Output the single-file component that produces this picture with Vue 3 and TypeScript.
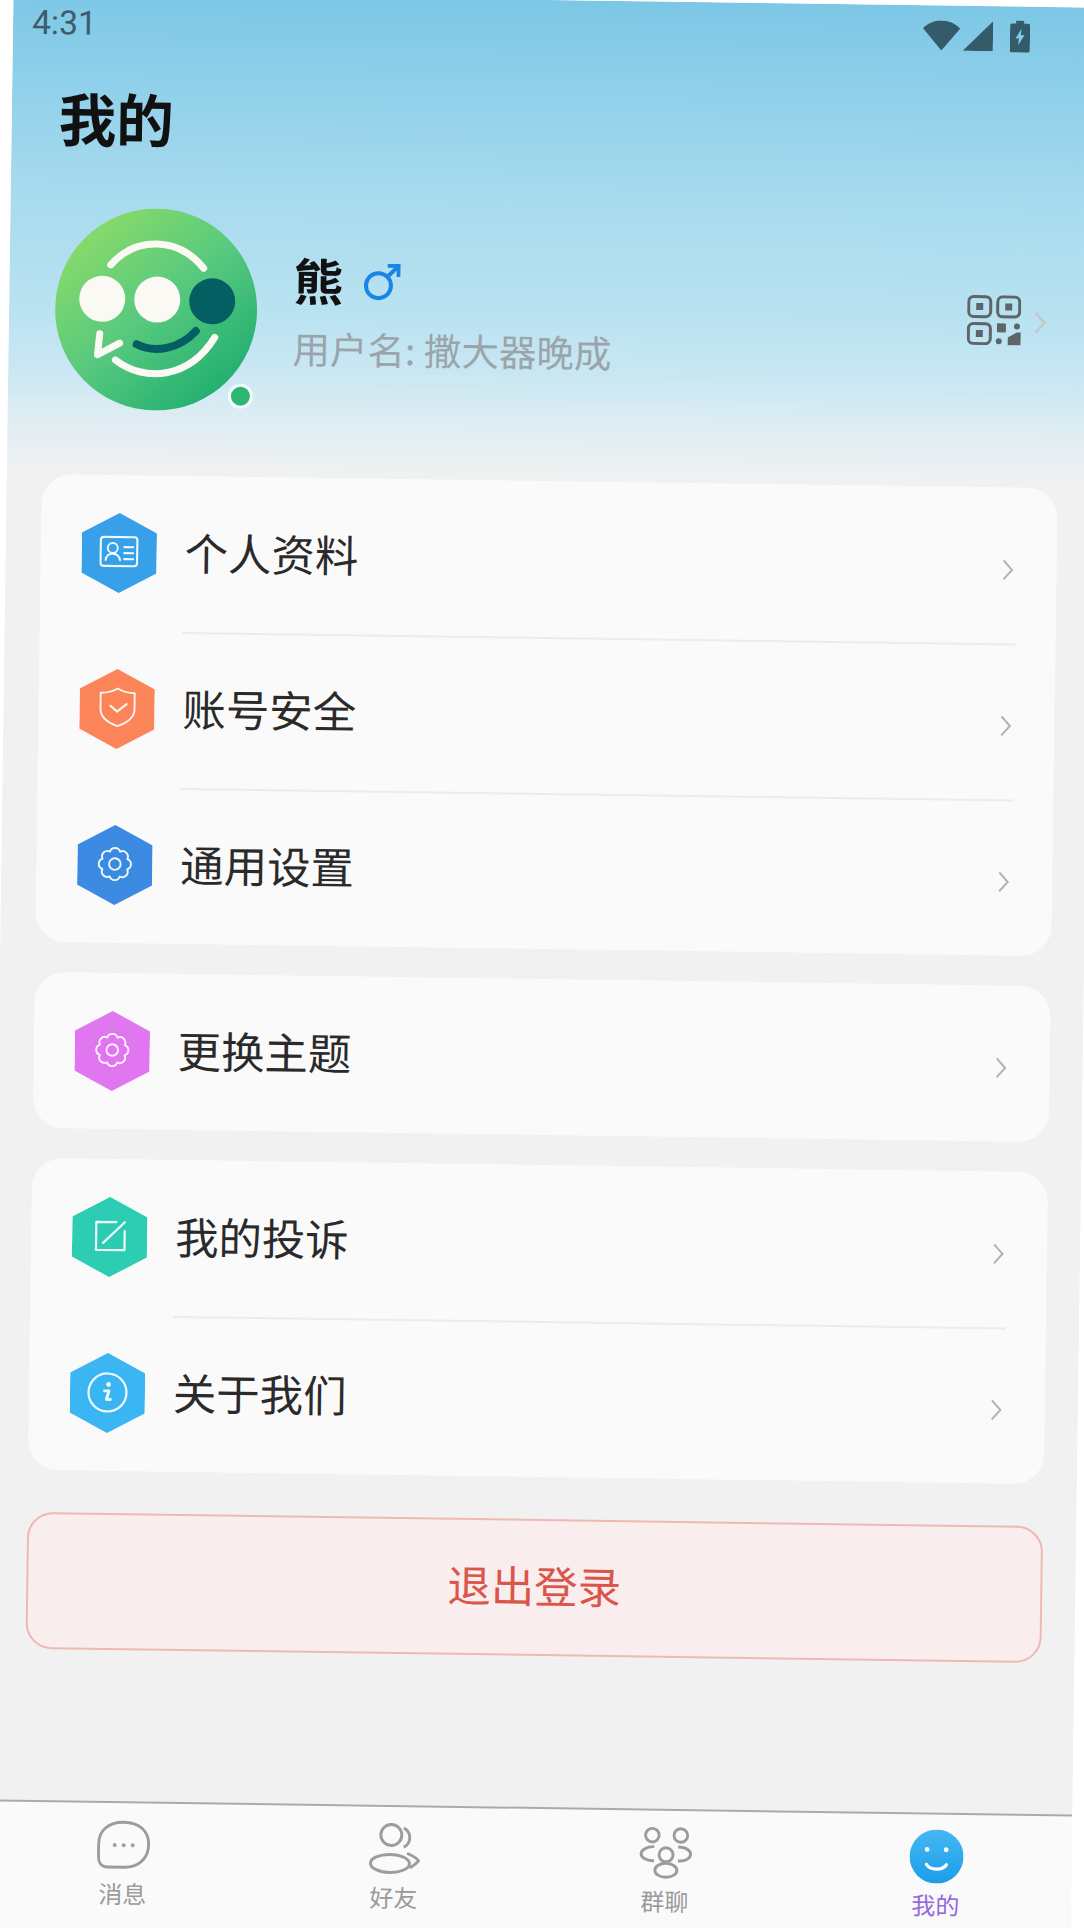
<script setup lang="ts">
interface Row { label: string; color: string; icon: string }
const groups: Row[][] = [
  [
    { label: '个人资料', color: '#37a0e8', icon: 'card' },
    { label: '账号安全', color: '#fb8559', icon: 'shield' },
    { label: '通用设置', color: '#3c8ae2', icon: 'gear' }
  ],
  [{ label: '更换主题', color: '#e076f0', icon: 'gear' }],
  [
    { label: '我的投诉', color: '#2ccdb3', icon: 'edit' },
    { label: '关于我们', color: '#3bb6f3', icon: 'info' }
  ]
]
const tabs = [
  { label: '消息', icon: 'msg' },
  { label: '好友', icon: 'friend' },
  { label: '群聊', icon: 'group' },
  { label: '我的', icon: 'me' }
]
function gearPath(): string {
  const cx = 37.5, cy = 39, r = 13.4
  const pt = (i: number) => {
    const a = ((i * 45 + 22.5) * Math.PI) / 180
    return `${(cx + r * Math.cos(a)).toFixed(2)} ${(cy + r * Math.sin(a)).toFixed(2)}`
  }
  let d = `M${pt(0)}`
  for (let i = 1; i <= 8; i++) d += `A5.4 5.4 0 0 1 ${pt(i)}`
  return `${d}Z`
}
const gear = gearPath()
</script>

<template>
  <div class="screen">
    <header class="hero">
      <div class="status">
        <span class="time">4:31</span>
        <div class="status-icons">
          <svg class="wifi" viewBox="0 0 37 30"><path d="M0 8C10-2.5 27-2.5 37 8L18.5 30Z" /></svg>
          <svg class="signal" viewBox="0 0 30 30"><path d="M30 0V30H0Z" /></svg>
          <svg class="battery" viewBox="0 0 20 32">
            <path fill-rule="evenodd" d="M6 0H14V3H18A2 2 0 0 1 20 5V30A2 2 0 0 1 18 32H2A2 2 0 0 1 0 30V5A2 2 0 0 1 2 3H6ZM11.5 8L5.5 18H9L8 25L14.5 14.5H10.8Z" />
          </svg>
        </div>
      </div>
      <h1 class="title">我的</h1>
      <div class="profile">
        <div class="avatar">
          <svg viewBox="0 0 202 202" class="avatar-img">
            <defs>
              <linearGradient id="avatarGrad" x1="0.12" y1="0.08" x2="0.85" y2="0.92">
                <stop offset="0" stop-color="#8cdc68" />
                <stop offset="0.5" stop-color="#58c97e" />
                <stop offset="1" stop-color="#1fae70" />
              </linearGradient>
            </defs>
            <circle cx="101" cy="101" r="101" fill="url(#avatarGrad)" />
            <circle cx="47" cy="91" r="23" fill="#fbf9f4" />
            <circle cx="102" cy="91" r="23" fill="#fbf9f4" />
            <circle cx="157" cy="92" r="23" fill="#045f62" />
            <path d="M55 57C80 28 122 28 148 59" fill="none" stroke="#fbf9f4" stroke-width="7" stroke-linecap="round" />
            <path d="M82 136C100 145 125 140 141 122" fill="none" stroke="#045f62" stroke-width="8" stroke-linecap="round" />
            <path d="M61 152C90 174 135 170 160 128" fill="none" stroke="#fbf9f4" stroke-width="7" stroke-linecap="round" />
            <path d="M45 126L43 147L65 135" fill="none" stroke="#fbf9f4" stroke-width="7" stroke-linecap="round" stroke-linejoin="round" />
          </svg>
          <span class="online"></span>
        </div>
        <div class="who">
          <div class="name-line">
            <span class="name">熊</span>
            <svg class="male" viewBox="0 0 37 37" fill="none" stroke="#1a84e8" stroke-width="4">
              <circle cx="15" cy="22" r="12.5" />
              <path d="M24 13L35 2M24 2H35V13" />
            </svg>
          </div>
          <div class="username">用户名: 撒大器晚成</div>
        </div>
        <div class="qr-wrap">
          <svg class="qr" viewBox="0 0 54 50">
            <g fill="none" stroke="#5e6468" stroke-width="3">
              <rect x="1.5" y="1.5" width="22" height="20" rx="5" />
              <rect x="30.5" y="1.5" width="22" height="20" rx="5" />
              <rect x="1.5" y="28.5" width="22" height="20" rx="5" />
            </g>
            <g fill="#5e6468">
              <rect x="9" y="8" width="7" height="7" />
              <rect x="38" y="8" width="7" height="7" />
              <rect x="9" y="35" width="7" height="7" />
              <rect x="30" y="28" width="9" height="9" rx="1" />
              <circle cx="50" cy="31" r="3" />
              <circle cx="32" cy="46" r="3" />
              <path d="M41 42L50 37H54V50H41Z" />
            </g>
          </svg>
          <svg class="chev-hero" viewBox="0 0 12 22" fill="none" stroke="#c3c8cb" stroke-width="2.6"><path d="M1.5 1L10.5 11L1.5 21" /></svg>
        </div>
      </div>
    </header>

    <main class="list">
      <section v-for="(group, g) in groups" :key="g" class="card">
        <div v-for="row in group" :key="row.label" class="row">
          <svg class="hex" viewBox="0 0 75 80">
            <polygon points="37.5,0 75,20 75,60 37.5,80 0,60 0,20" :fill="row.color" />
            <g fill="none" stroke="#fff" stroke-width="1.9" stroke-linecap="round" stroke-linejoin="round" opacity="0.92">
              <template v-if="row.icon === 'card'">
                <rect x="19" y="24" width="36.5" height="29" rx="3" stroke-width="2.1" />
                <circle cx="31" cy="35" r="5" />
                <path d="M24 47C25 38.5 37 38.5 38.5 47M42.5 34H51.5M42.5 40H51.5M42.5 46H51.5" stroke-width="2.1" />
              </template>
              <template v-else-if="row.icon === 'shield'">
                <path d="M38 19.5C43 22.5 48 24 55 24V40C55 48.5 47 54 38 57C29 54 21 48.5 21 40V24C28 24 33 22.5 38 19.5Z" />
                <path d="M31 37L37.5 42.5L47 35" stroke-width="2.2" />
              </template>
              <template v-else-if="row.icon === 'gear'">
                <path :d="gear" />
                <circle cx="37.5" cy="39" r="5.8" />
              </template>
              <template v-else-if="row.icon === 'edit'">
                <path d="M44 25H24V53H52.5V34" stroke-width="2.2" />
                <path d="M31 46L52.5 25" stroke-width="2.2" />
              </template>
              <template v-else>
                <circle cx="37.5" cy="39.5" r="19" stroke-width="2.2" />
                <circle cx="38.5" cy="31.5" r="2.4" fill="#fff" stroke="none" />
                <path d="M34.5 38H39L36.4 46.5H40.5" stroke-width="2.8" />
              </template>
            </g>
          </svg>
          <span class="label">{{ row.label }}</span>
          <svg class="chev" viewBox="0 0 11 21" fill="none" stroke="#b2b2b4" stroke-width="2"><path d="M1 1L9.5 10.5L1 20" /></svg>
        </div>
      </section>
      <button class="logout">退出登录</button>
    </main>

    <nav class="tabbar">
      <div v-for="tab in tabs" :key="tab.label" class="tab" :class="{ active: tab.icon === 'me' }">
        <svg class="tab-icon" viewBox="0 0 54 54" fill="none" stroke="#9c9c9c" stroke-width="2.9">
          <template v-if="tab.icon === 'msg'">
            <path d="M11 49C5 49 2 45 2 39V26C2 12 12 4 27 4C42 4 52 12 52 26C52 41 41 49 28 49Z" />
            <g fill="#a0a0a0" stroke="none">
              <circle cx="18" cy="27" r="2" /><circle cx="27" cy="27" r="2" /><circle cx="36" cy="27" r="2" />
            </g>
          </template>
          <template v-else-if="tab.icon === 'friend'">
            <circle cx="23.5" cy="13" r="10.5" />
            <path d="M36 6C44 10 44 21 36 25" />
            <ellipse cx="22.5" cy="41.5" rx="19.5" ry="9" />
            <path d="M39.5 31C44 33 50 36 51 38.5C49 41 46 44 42 45.5" />
          </template>
          <template v-else-if="tab.icon === 'group'">
            <circle cx="13.5" cy="9.5" r="6.8" />
            <circle cx="42" cy="9.5" r="6.8" />
            <circle cx="27.5" cy="29" r="7" />
            <path d="M15.5 21C7 21 2.5 25 2.5 28C2.5 31.5 7 35.5 15.5 35M39.5 21C48 21 52 25 52 28C52 31.5 48 35.5 39.5 35" />
            <ellipse cx="27.5" cy="44.5" rx="11" ry="7" />
          </template>
          <template v-else>
            <defs>
              <linearGradient id="meGrad" x1="0.5" y1="0" x2="0.5" y2="1">
                <stop offset="0" stop-color="#47b7f3" />
                <stop offset="1" stop-color="#1a9ee8" />
              </linearGradient>
            </defs>
            <circle cx="27" cy="27" r="27" fill="url(#meGrad)" stroke="none" />
            <circle cx="17.5" cy="20" r="2.4" fill="#fff" stroke="none" />
            <circle cx="36.5" cy="20" r="2.4" fill="#fff" stroke="none" />
            <path d="M17 35C21 41 33 41 37 35" stroke="#fff" stroke-width="3.2" stroke-linecap="round" />
          </template>
        </svg>
        <span class="tab-label">{{ tab.label }}</span>
      </div>
    </nav>
  </div>
</template>

<style scoped>
.screen {
  width: 1084px;
  height: 1940px;
  display: flex;
  flex-direction: column;
  background: #f1f1f1;
  transform: rotate(0.8deg);
  transform-origin: 542px 964px;
  font-family: "Noto Sans CJK SC", "Noto Sans", sans-serif;
  overflow: hidden;
}
.hero {
  height: 481px;
  box-sizing: border-box;
  background: linear-gradient(180deg, #7cc7e6 0%, #a6daee 40%, #b9e2f1 65%, #c9e7f3 78%, #deedf3 88%, #f1f1f1 100%);
}
.status {
  height: 58px;
  display: flex;
  align-items: center;
  justify-content: space-between;
  padding: 0 67px 0 19px;
  color: #3d5c6a;
}
.time {
  font-family: Roboto, sans-serif;
  font-size: 33.5px;
  line-height: 1;
  margin-top: 2px;
}
.status-icons {
  display: flex;
  align-items: center;
  margin-top: 1px;
}
.status-icons svg { fill: #355a6a; display: block; }
.wifi { width: 37px; height: 30px; }
.signal { width: 30px; height: 30px; margin-left: 3px; }
.battery { width: 20px; height: 32px; margin-left: 17px; }
.title {
  margin: 28px 0 0 47px;
  font-size: 57.5px;
  line-height: 74px;
  font-weight: 700;
  color: #111;
}
.profile {
  margin-top: 54px;
  padding: 0 47px 0 46px;
  display: flex;
  align-items: center;
}
.avatar {
  width: 202px;
  height: 202px;
  position: relative;
  flex: none;
}
.avatar-img { width: 100%; height: 100%; display: block; }
.online {
  position: absolute;
  left: 174px;
  top: 174px;
  width: 25px;
  height: 25px;
  box-sizing: border-box;
  border: 3px solid #f2fafb;
  border-radius: 50%;
  background: #2fb571;
}
.who { margin-left: 36px; flex: 1; margin-top: -7px; }
.name-line { display: flex; align-items: center; height: 68px; }
.name { font-size: 50px; line-height: 68px; font-weight: 700; color: #111; }
.male { width: 37px; height: 37px; margin-left: 20px; margin-top: 5px; }
.username {
  margin-top: 10px;
  font-size: 37.5px;
  line-height: 50px;
  color: #9aa4aa;
  white-space: nowrap;
}
.qr-wrap { display: flex; align-items: center; margin-top: -3px; }
.qr { width: 54px; height: 50px; display: block; }
.chev-hero { width: 12px; height: 22px; margin-left: 13px; margin-top: 5px; }
.list {
  flex: 1;
  padding: 0 33px 0 35px;
  display: flex;
  flex-direction: column;
}
.card {
  background: #fafafa;
  border-radius: 30px;
  padding: 0 40px;
}
.card + .card { margin-top: 30px; }
.row {
  height: 156px;
  display: flex;
  align-items: center;
  position: relative;
}
.row + .row::before {
  content: "";
  position: absolute;
  top: 0;
  left: 103px;
  right: 0;
  height: 2px;
  background: #ececec;
}
.hex { width: 75px; height: 80px; flex: none; display: block; margin-left: 1px; }
.label {
  margin-left: 28px;
  font-size: 43.4px;
  line-height: 60px;
  color: #2a2a2a;
  flex: 1;
  margin-top: -6px;
}
.chev { width: 11px; height: 21px; flex: none; margin-right: 3px; margin-top: 8px; }
.logout {
  margin-top: 42px;
  height: 137px;
  box-sizing: border-box;
  border: 2px solid #eeb9b2;
  border-radius: 26px;
  background: #f9eeed;
  color: #d9564c;
  font-family: inherit;
  font-size: 43.4px;
  padding: 0 0 7px;
}
.tabbar {
  height: 133px;
  box-sizing: border-box;
  border-top: 2px solid #aaaaaa;
  background: #fafafa;
  display: grid;
  grid-template-columns: repeat(4, 1fr);
  flex: none;
}
.tab {
  display: flex;
  flex-direction: column;
  align-items: center;
  padding-top: 15px;
}
.tab-icon { width: 54px; height: 54px; display: block; }
.tab-label {
  margin-top: 4px;
  font-size: 24px;
  line-height: 34px;
  color: #9a9a9a;
}
.tab.active .tab-label { color: #9468dc; }
</style>

<style>
html, body { margin: 0; background: #fff; overflow: hidden; }
</style>
